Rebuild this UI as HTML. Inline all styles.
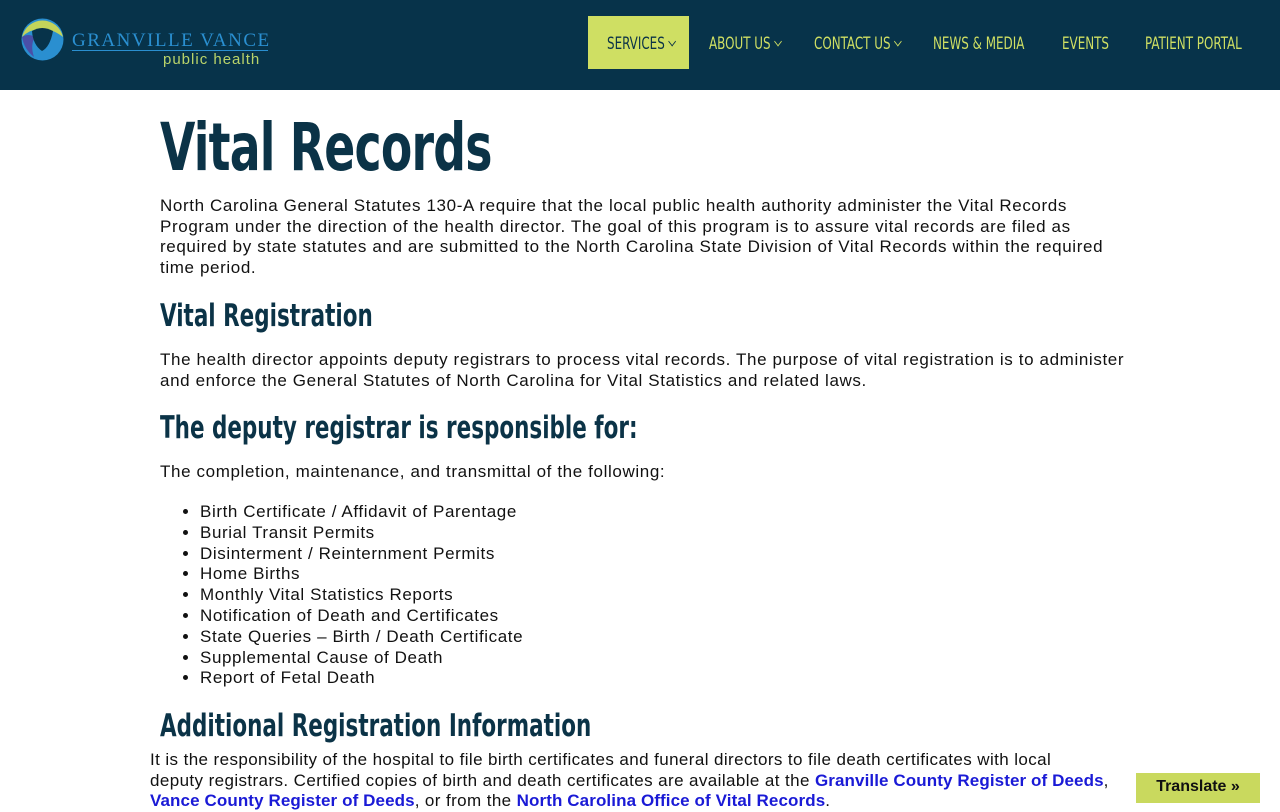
<!DOCTYPE html>
<html><head><meta charset="utf-8"><style>
*{margin:0;padding:0;box-sizing:border-box}
body{width:1280px;height:800px;overflow:hidden;background:#fff;font-family:"Liberation Sans",sans-serif;color:#111}
header{position:absolute;left:0;top:0;width:1280px;height:90px;background:#07334a}
.nav{position:absolute;top:17px;height:53px;font-family:"DejaVu Sans Condensed",sans-serif;font-size:17px;color:#cfdf63;line-height:55px;transform:scaleX(.78);transform-origin:left;white-space:nowrap}
.nav.act{color:#0b3347}
.bg{position:absolute;left:588px;top:16px;width:101px;height:53px;background:#cfdf63}
.ch{display:inline-block;width:7px;height:7px;border-right:1.5px solid currentColor;border-bottom:1.5px solid currentColor;transform:rotate(45deg);margin-left:6px;vertical-align:4px}
h1,h2{font-family:"DejaVu Sans Condensed",sans-serif;color:#0b3347;font-weight:bold;position:absolute;left:160px;white-space:nowrap;transform:scaleX(.77);transform-origin:left}
h1{top:109px;font-size:66px;letter-spacing:-1px}
h2{font-size:31px}
p{position:absolute;left:160px;width:960px;font-size:17px;line-height:20.7px;color:#111;letter-spacing:.62px}
ul{position:absolute;left:200px;top:502px;font-size:17px;line-height:20.8px;letter-spacing:.6px}
li{list-style:disc}
a{color:#1a1ad6;font-weight:bold;text-decoration:none;letter-spacing:.1px}
.tr{position:absolute;left:1136px;top:773px;width:124px;height:30px;background:#c9d95e;font-weight:bold;font-size:16px;text-align:center;line-height:28px;color:#111}
</style></head><body>
<header>
<svg style="position:absolute;left:20px;top:17px" width="45" height="45" viewBox="0 0 45 45">
<circle cx="22.5" cy="22.5" r="21" fill="#2a8fd0"/>
<path d="M2 20 A21 21 0 0 1 43 20 Q30 10 22 14 Q12 10 2 20Z" fill="#c3d45a"/>
<path d="M2 20 Q4 32 14 40 Q10 28 15 20 Q8 16 2 20Z" fill="#4a4fa8"/>
<path d="M12 14 Q22 8 33 14 Q30 30 22 34 Q13 28 12 14Z" fill="#07334a"/>
</svg>
<div style="position:absolute;left:72px;top:30px;font-family:'Liberation Serif',serif;font-size:19px;letter-spacing:1.5px;color:#2a8fd0">GRANVILLE VANCE</div>
<div style="position:absolute;left:72px;top:50px;width:196px;height:1px;background:#2a8fd0"></div>
<div style="position:absolute;left:163px;top:51px;font-size:15px;letter-spacing:1px;color:#b9d36a">public health</div>
<div class="bg"></div>
<div class="nav act" style="left:607px">SERVICES<span class="ch"></span></div>
<div class="nav" style="left:709px">ABOUT US<span class="ch"></span></div>
<div class="nav" style="left:814px">CONTACT US<span class="ch"></span></div>
<div class="nav" style="left:933px">NEWS &amp; MEDIA</div>
<div class="nav" style="left:1062px">EVENTS</div>
<div class="nav" style="left:1145px">PATIENT PORTAL</div>
</header>
<h1>Vital Records</h1>
<p style="top:196px">North Carolina General Statutes 130-A require that the local public health authority administer the Vital Records Program under the direction of the health director. The goal of this program is to assure vital records are filed as required by state statutes and are submitted to the North Carolina State Division of Vital Records within the required time period.</p>
<h2 style="top:298px">Vital Registration</h2>
<p style="top:350px;width:990px">The health director appoints deputy registrars to process vital records. The purpose of vital registration is to administer<br>and enforce the General Statutes of North Carolina for Vital Statistics and related laws.</p>
<h2 style="top:410px">The deputy registrar is responsible for:</h2>
<p style="top:462px">The completion, maintenance, and transmittal of the following:</p>
<ul>
<li>Birth Certificate / Affidavit of Parentage</li>
<li>Burial Transit Permits</li>
<li>Disinterment / Reinternment Permits</li>
<li>Home Births</li>
<li>Monthly Vital Statistics Reports</li>
<li>Notification of Death and Certificates</li>
<li>State Queries – Birth / Death Certificate</li>
<li>Supplemental Cause of Death</li>
<li>Report of Fetal Death</li>
</ul>
<h2 style="top:708px">Additional Registration Information</h2>
<p style="top:750px;left:150px;width:990px;letter-spacing:.4px">It is the responsibility of the hospital to file birth certificates and funeral directors to file death certificates with local<br>deputy registrars. Certified copies of birth and death certificates are available at the <a>Granville County Register of Deeds</a>,<br><a>Vance County Register of Deeds</a>, or from the <a>North Carolina Office of Vital Records</a>.</p>
<div class="tr">Translate »</div>
</body></html>
